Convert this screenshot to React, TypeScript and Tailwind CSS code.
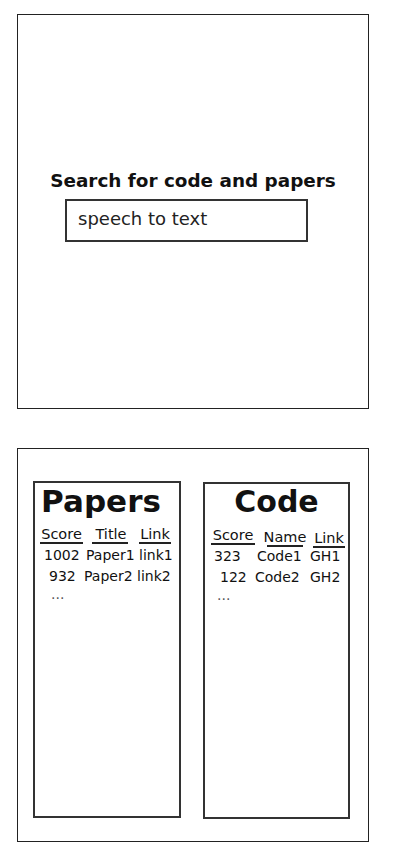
import React from "react";

export default function App() {
  return (
    <div className="min-h-screen bg-white pl-[17px] pt-[14px] font-['DejaVu_Sans',sans-serif] text-[#111]">
      {/* SEARCH BOX */}
      <div className="w-[352px] h-[395px] border border-[#222] flex flex-col pt-[155px]">
        <h2 className="text-center text-[18.4px] leading-[22px] font-bold">
          Search for code and papers
        </h2>
        <input
          readOnly
          defaultValue="speech to text"
          className="mt-[7px] ml-[47px] w-[243px] h-[43px] border-2 border-[#333] pl-[11px] pb-[4px] text-[18px] text-[#222] outline-none bg-white"
        />
      </div>

      {/* RESULTS */}
      <div className="mt-[39px] w-[352px] h-[394px] border border-[#222] flex items-start pt-[32px] pl-[15px]">
        {/* Papers */}
        <div className="w-[148px] h-[337px] border-2 border-[#333] flex flex-col">
          <h1 className="text-[31px] leading-[36px] font-bold text-center pr-[12px]">
            Papers
          </h1>
          <div className="mt-[8px] flex text-[14.5px] leading-[15px]">
            <span className="ml-[5px] w-[43px] flex justify-center whitespace-nowrap border-b-2 border-[#222]">
              Score
            </span>
            <span className="ml-[9px] w-[36px] flex justify-center whitespace-nowrap border-b-2 border-[#222] pl-[2px]">
              Title
            </span>
            <span className="ml-[11px] w-[32px] flex justify-center whitespace-nowrap border-b-2 border-[#222]">
              Link
            </span>
          </div>
          <div className="text-[14px] leading-[21px] whitespace-nowrap">
            <div className="flex mt-[1px]">
              <span className="w-[49px] pl-[9px]">1002</span>
              <span className="w-[53px] pl-[2px]">Paper1</span>
              <span className="pl-[2px]">link1</span>
            </div>
            <div className="flex">
              <span className="w-[49px] pl-[14px]">932</span>
              <span className="w-[53px]">Paper2</span>
              <span>link2</span>
            </div>
            <div className="pl-[16px] leading-[15px] text-[#555]">...</div>
          </div>
        </div>

        {/* Code */}
        <div className="ml-[22px] mt-[1px] w-[147px] h-[337px] border-2 border-[#333] flex flex-col">
          <h1 className="text-[30px] leading-[36px] font-bold text-center">
            Code
          </h1>
          <div className="mt-[8px] flex text-[14.5px] leading-[15px]">
            <span className="ml-[6px] w-[44px] flex justify-center whitespace-nowrap border-b-2 border-[#222]">
              Score
            </span>
            <span className="ml-[12px] w-[36px] flex justify-center whitespace-nowrap border-b-2 border-[#222] translate-y-[2px]">
              Name
            </span>
            <span className="ml-[10px] w-[32px] flex justify-center whitespace-nowrap border-b-2 border-[#222] translate-y-[3px]">
              Link
            </span>
          </div>
          <div className="text-[14px] leading-[21px] whitespace-nowrap">
            <div className="flex mt-[1px]">
              <span className="w-[48px] pl-[9px]">323</span>
              <span className="w-[53px] pl-[4px]">Code1</span>
              <span className="pl-[4px]">GH1</span>
            </div>
            <div className="flex">
              <span className="w-[48px] pl-[15px]">122</span>
              <span className="w-[53px] pl-[2px]">Code2</span>
              <span className="pl-[4px]">GH2</span>
            </div>
            <div className="pl-[12px] leading-[15px] text-[#555]">...</div>
          </div>
        </div>
      </div>
    </div>
  );
}
